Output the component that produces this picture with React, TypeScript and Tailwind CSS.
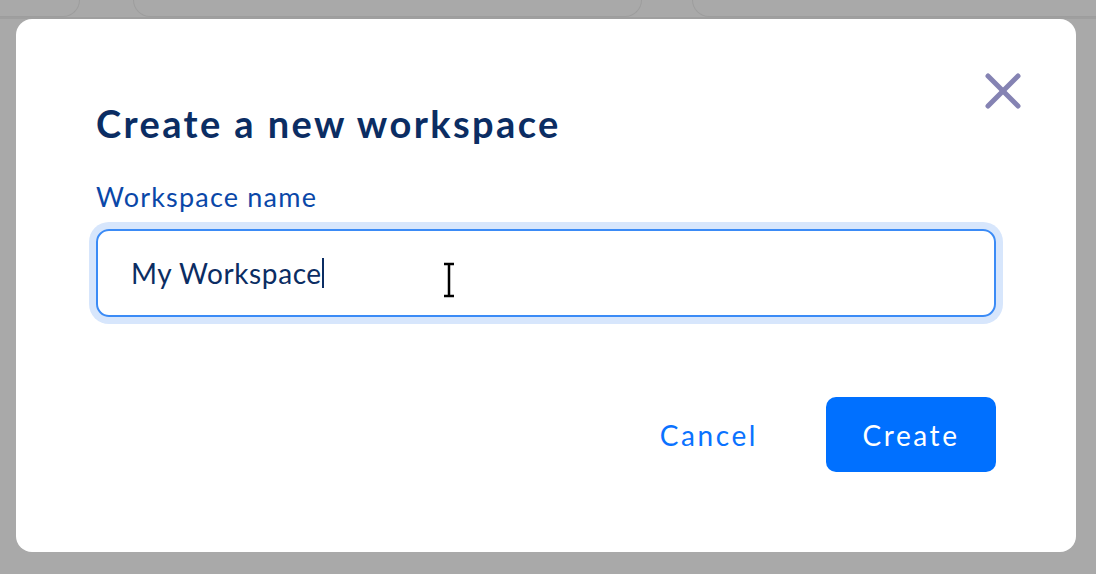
export default function App() {
  return (
    <div className="h-[574px] w-[1096px] overflow-hidden bg-[#a9a9a9] font-['Lato',sans-serif]">
      {/* dimmed page behind the dialog */}
      <div className="flex h-[19px] border-b-2 border-[#9f9f9f]">
        <div className="ml-[-40px] h-[17px] w-[120px] shrink-0 rounded-b-[18px] border border-t-0 border-[#9d9d9d]" />
        <div className="ml-[53px] h-[17px] w-[509px] shrink-0 rounded-b-[18px] border border-t-0 border-[#9d9d9d]" />
        <div className="ml-[50px] h-[17px] w-[500px] shrink-0 rounded-b-[18px] border border-t-0 border-[#9d9d9d]" />
      </div>

      <div className="relative mx-[16px] h-[533px] w-[1060px] rounded-[16px] bg-white px-[80px] pt-[81px]">
        <button className="absolute right-[55px] top-[54px] text-[#8583b3]">
          <svg width="36" height="36" viewBox="0 0 36 36" fill="none" stroke="currentColor" strokeWidth="5" strokeLinecap="round">
            <path d="M3 3L33 33" />
            <path d="M33 3L3 33" />
          </svg>
        </button>

        <h2 className="text-[38px] font-bold leading-[46px] tracking-[2.4px] text-[#0b2d63]">
          Create a new workspace
        </h2>

        <label className="mt-[36px] block text-[27px] leading-[30px] tracking-[1.2px] text-[#0a47a8]">
          Workspace name
        </label>

        <div className="relative mt-[17px] flex h-[88px] w-[900px] items-center rounded-[13px] border-2 border-[#3b8bf6] pl-[33px] ring-[7px] ring-[#d7e6fc]">
          <span className="text-[28px] tracking-[0.6px] text-[#0b2d63]">My Workspace</span>
          <span className="h-[30px] w-[2px] bg-[#0b2d63]" />
          <svg className="absolute left-[344px] top-[31px]" width="14" height="36" viewBox="0 0 14 36">
            <path d="M2 2h10M7 2v32M2 34h10" stroke="#fff" strokeWidth="5" fill="none" />
            <path d="M2 2h10M7 2v32M2 34h10" stroke="#000" strokeWidth="2.5" fill="none" />
          </svg>
        </div>

        <div className="mt-[80px] flex items-center justify-end gap-[68px]">
          <button className="text-[28px] tracking-[2.6px] text-[#0a72ff]">Cancel</button>
          <button className="h-[75px] w-[170px] rounded-[10px] bg-[#0070ff] text-[28px] tracking-[2.6px] text-white">
            Create
          </button>
        </div>
      </div>
    </div>
  );
}
